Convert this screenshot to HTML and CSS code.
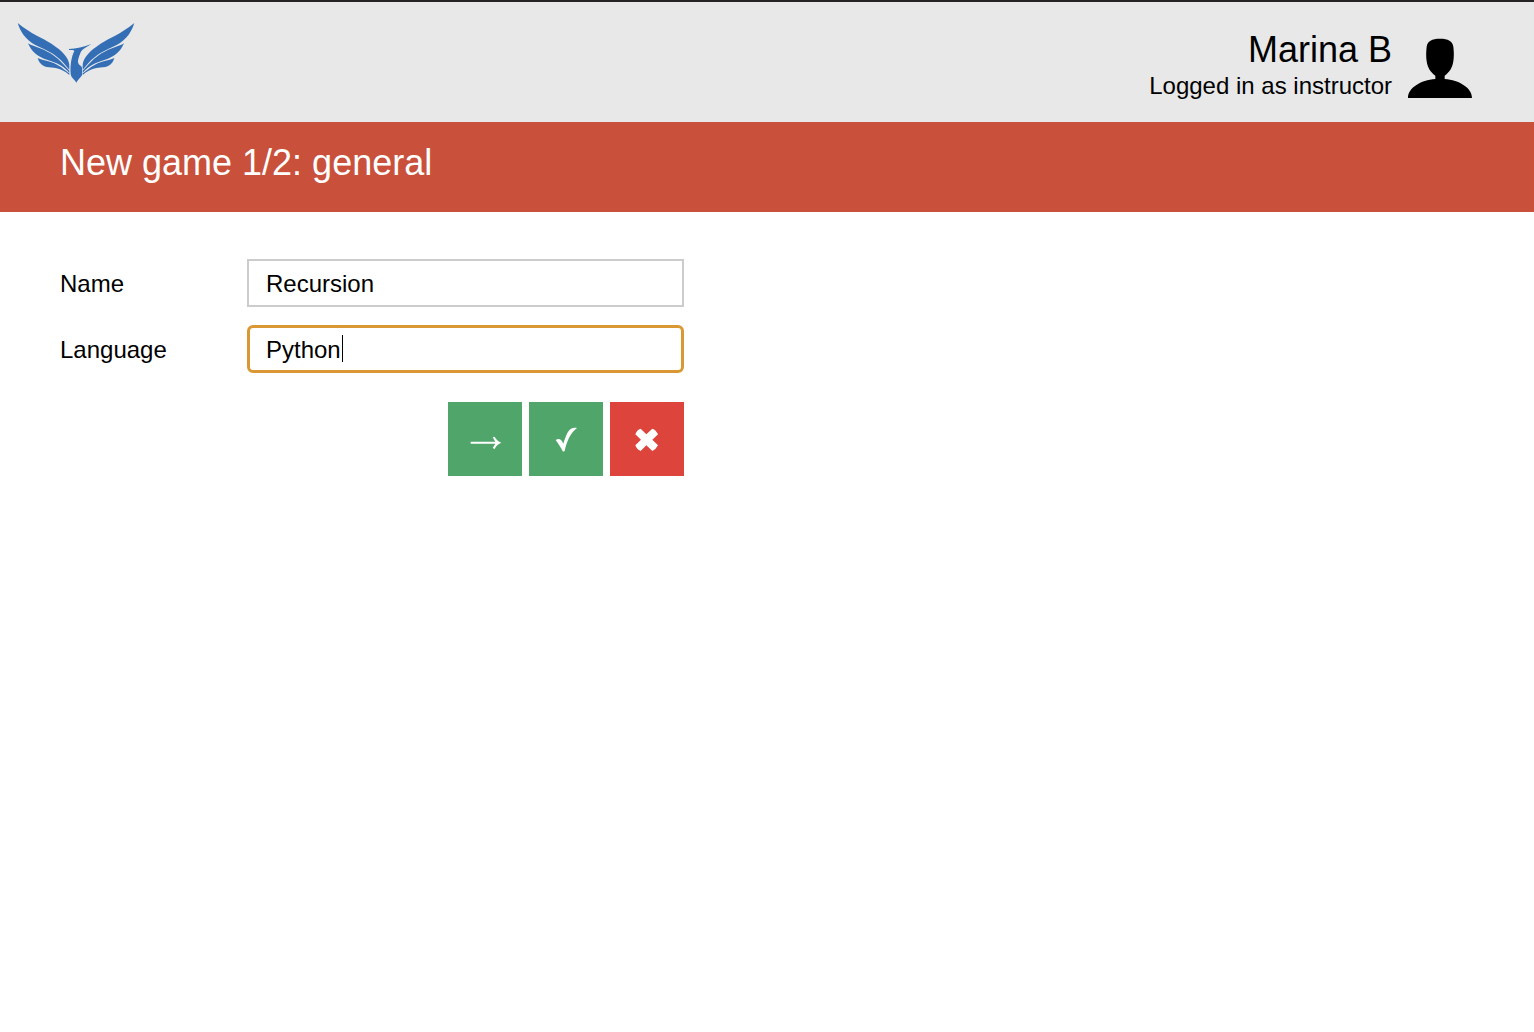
FILE: index.html
```html
<!DOCTYPE html>
<html lang="en">
<head>
<meta charset="utf-8">
<meta name="viewport" content="width=device-width, initial-scale=1">
<title>New game</title>
<link rel="stylesheet" href="styles.css">
</head>
<body>
<header class="topbar">
  <a class="logo" href="#" aria-label="Home">
    <svg class="logo-image" viewBox="51 66 357 186" aria-hidden="true">
      <defs>
        <g id="wing">
          <path d="M53 69C72 84 92 98 112 108C126 115 140 122 152 130C164 138 174 145 184 154C198 168 208 182 208 197V209C202 203 196 194 190 188C178 176 168 168 156 160C142 151 122 143 106 135C92 127 80 117 70 104C62 92 57 82 53 69Z"/>
          <path d="M84 130C94 136 106 140 120 145C136 151 150 159 162 167C178 178 192 194 208 212V218C198 208 190 201 180 195C168 187 150 182 132 176C112 169 94 154 84 130Z"/>
          <path d="M113 174C122 179 136 181 150 185C166 190 176 196 184 202C194 210 202 216 208 220V225C196 215 184 208 170 205C158 202 150 203 140 201C126 198 117 188 113 174Z"/>
        </g>
      </defs>
      <use href="#wing"/>
      <use href="#wing" transform="translate(456 0) scale(-1 1)"/>
      <path d="M207 147C228 146 252 141 274 132C262 141 246 147 242 157C237 170 231 184 236 192C239 197 245 198 246 203V226C240 234 233 240 229 248C224 239 213 233 212 222C210 198 214 170 223 153C221 149 213 151 207 150Z"/>
    </svg>
  </a>
  <div class="account">
    <div class="account-text">
      <div class="account-name">Marina B</div>
      <div class="account-role">Logged in as instructor</div>
    </div>
    <svg class="avatar" viewBox="24 26 192 180" aria-hidden="true">
      <path d="M120 28C145 28 157 35 160 52C162 68 162 82 160 96C157 117 147 130 134 139V149C178 152 216 176 216 206H24C24 176 62 152 106 149V139C93 130 83 117 80 96C78 82 78 68 80 52C83 35 95 28 120 28Z"/>
    </svg>
  </div>
</header>
<div class="titlebar">
  <h1 class="title">New game 1/2: general</h1>
</div>
<main class="content">
  <form class="form">
    <div class="row">
      <label class="label" for="name">Name</label>
      <div class="field"><input class="input" id="name" type="text" value="Recursion"></div>
    </div>
    <div class="row">
      <label class="label" for="language">Language</label>
      <div class="field">
        <input class="input input-active" id="language" type="text" value="Python">
        <span class="caret" aria-hidden="true"></span>
      </div>
    </div>
    <div class="actions">
      <button class="button" type="button" aria-label="Next">
        <svg class="icon" viewBox="0 0 222 222" aria-hidden="true"><path d="M68 119H142L134 106L140 104C144 113 152 119 160 122C152 125 144 131 140 141L134 138L142 125H68Z"/></svg>
      </button>
      <button class="button" type="button" aria-label="Save">
        <svg class="icon" viewBox="0 0 222 222" aria-hidden="true"><path d="M80 114C89 107 98 111 103 125C112 98 119 73 144 78C125 92 113 118 107 147L102 149C96 137 89 127 80 114Z"/></svg>
      </button>
      <button class="button button-danger" type="button" aria-label="Cancel">
        <svg class="icon" viewBox="0 0 222 222" aria-hidden="true"><path d="M92 80L109 97L127 80Q138 84 144 97L127 113L144 130Q138 142 127 147L109 130L92 147Q80 142 76 130L93 113L76 97Q80 84 92 80Z"/></svg>
      </button>
    </div>
  </form>
</main>
</body>
</html>
```
FILE: styles.css
```css
* {
  box-sizing: border-box;
}

body {
  margin: 0;
  background: #fff;
  color: #000;
  font: 24px/28px "Liberation Sans", Arial, sans-serif;
}

.topbar {
  display: flex;
  justify-content: space-between;
  align-items: flex-start;
  min-height: 122px;
  padding: 20px 62px 20px 17px;
  border-top: 2px solid #252323;
  background: #e8e8e8;
}

.logo-image {
  display: block;
  width: 119px;
  height: 62px;
  fill: #346fb6;
}

.account {
  display: flex;
  align-items: flex-start;
  gap: 16px;
  padding-top: 8px;
}

.account-text {
  text-align: right;
}

.account-name {
  font-size: 36px;
  line-height: 40px;
}

.account-role {
  line-height: 32px;
}

.avatar {
  width: 64px;
  height: 60px;
  margin-top: 8px;
}

.titlebar {
  min-height: 90px;
  padding: 21px 60px;
  background: #c9503b;
  color: #fff;
}

.title {
  margin: 0;
  font-size: 36px;
  line-height: 40px;
  font-weight: 400;
}

.content {
  padding: 47px 60px;
}

.form {
  display: flex;
  flex-direction: column;
  gap: 18px;
  max-width: 624px;
}

.row {
  display: grid;
  grid-template-columns: 187px 1fr;
  align-items: center;
}

.label {
  padding-top: 2px;
}

.field {
  position: relative;
}

.input {
  display: block;
  width: 100%;
  height: 48px;
  padding: 2px 17px 0;
  border: 2px solid #ccc;
  border-radius: 0;
  background: #fff;
  color: inherit;
  font: inherit;
  outline: none;
}

.input-active {
  padding: 2px 16px 0;
  border: 3px solid #da9834;
  border-radius: 6px;
}

.caret {
  position: absolute;
  top: 10px;
  left: 95px;
  width: 1px;
  height: 27px;
  background: #000;
}

.actions {
  display: flex;
  justify-content: flex-end;
  gap: 7px;
  padding-top: 11px;
}

.button {
  width: 74px;
  height: 74px;
  padding: 0;
  border: 0;
  background: #4fa56a;
  color: #fff;
}

.button-danger {
  background: #dd443c;
}

.icon {
  display: block;
  width: 74px;
  height: 74px;
  fill: currentColor;
}
```
